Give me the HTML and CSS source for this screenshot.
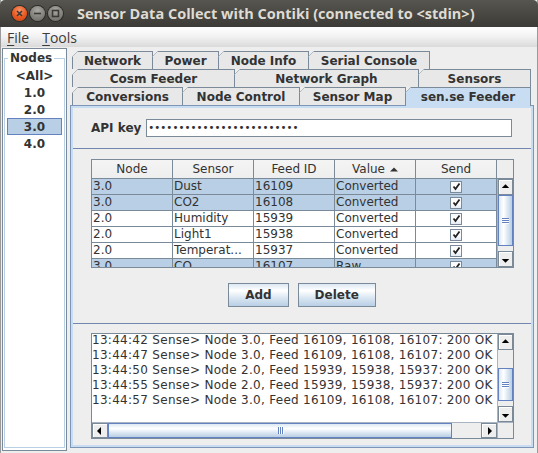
FILE: index.html
```html
<!DOCTYPE html>
<html lang="en">
<head>
<meta charset="utf-8">
<title>Sensor Data Collect with Contiki</title>
<link rel="stylesheet" href="styles.css">
</head>
<body>
<div class="window">
  <header class="titlebar">
    <div class="wbtns">
      <span class="wbtn close"><svg width="15" height="15" viewBox="0 0 15 15"><path d="M5 5 L10 10 M10 5 L5 10"/></svg></span>
      <span class="wbtn min"><svg width="15" height="15" viewBox="0 0 15 15"><path d="M4 7.5 H11"/></svg></span>
      <span class="wbtn max"><svg width="15" height="15" viewBox="0 0 15 15"><rect x="4.5" y="4.5" width="6" height="6"/></svg></span>
    </div>
    <div class="title">Sensor Data Collect with Contiki (connected to &lt;stdin&gt;)</div>
  </header>
  <nav class="menubar"><span class="menu"><u>F</u>ile</span><span class="menu"><u>T</u>ools</span></nav>
  <div class="main">
    <aside class="nodes">
      <fieldset class="nodes-box">
        <legend>Nodes</legend>
        <ul class="node-list">
          <li>&lt;All&gt;</li>
          <li>1.0</li>
          <li>2.0</li>
          <li class="sel">3.0</li>
          <li>4.0</li>
        </ul>
      </fieldset>
    </aside>
    <section class="tabpane">
      <div class="tabrow">
        <div class="tab t-network">Network</div>
        <div class="tab t-power">Power</div>
        <div class="tab t-nodeinfo">Node Info</div>
        <div class="tab t-serial">Serial Console</div>
      </div>
      <div class="tabrow">
        <div class="tab t-cosm">Cosm Feeder</div>
        <div class="tab t-graph">Network Graph</div>
        <div class="tab t-sensors">Sensors</div>
      </div>
      <div class="tabrow">
        <div class="tab t-conv">Conversions</div>
        <div class="tab t-control">Node Control</div>
        <div class="tab t-map">Sensor Map</div>
        <div class="tab t-sense active">sen.se Feeder</div>
      </div>
      <div class="content">
        <div class="panel">
          <div class="apirow">
            <label class="apilabel">API key</label>
            <div class="pwfield">•••••••••••••••••••••••••</div>
          </div>
          <div class="split">
            <div class="split-top">
              <div class="tablewrap">
                <div class="thead">
                  <div class="th">Node</div>
                  <div class="th">Sensor</div>
                  <div class="th">Feed ID</div>
                  <div class="th">Value <svg class="sort" width="8" height="5" viewBox="0 0 8 5"><path d="M0 4.5 L4 0.5 L8 4.5 Z"/></svg></div>
                  <div class="th">Send</div>
                </div>
                <div class="th-corner"></div>
                <div class="tbody">
                  <div class="tr sel"><div class="td">3.0</div><div class="td">Dust</div><div class="td">16109</div><div class="td">Converted</div><div class="td chk"><span class="cb"><svg width="9" height="9" viewBox="0 0 9 9"><path d="M1.5 4.5 L3.5 7 L7.5 1.5"/></svg></span></div></div>
                  <div class="tr sel"><div class="td">3.0</div><div class="td">CO2</div><div class="td">16108</div><div class="td">Converted</div><div class="td chk"><span class="cb"><svg width="9" height="9" viewBox="0 0 9 9"><path d="M1.5 4.5 L3.5 7 L7.5 1.5"/></svg></span></div></div>
                  <div class="tr"><div class="td">2.0</div><div class="td">Humidity</div><div class="td">15939</div><div class="td">Converted</div><div class="td chk"><span class="cb"><svg width="9" height="9" viewBox="0 0 9 9"><path d="M1.5 4.5 L3.5 7 L7.5 1.5"/></svg></span></div></div>
                  <div class="tr"><div class="td">2.0</div><div class="td">Light1</div><div class="td">15938</div><div class="td">Converted</div><div class="td chk"><span class="cb"><svg width="9" height="9" viewBox="0 0 9 9"><path d="M1.5 4.5 L3.5 7 L7.5 1.5"/></svg></span></div></div>
                  <div class="tr"><div class="td">2.0</div><div class="td">Temperat...</div><div class="td">15937</div><div class="td">Converted</div><div class="td chk"><span class="cb"><svg width="9" height="9" viewBox="0 0 9 9"><path d="M1.5 4.5 L3.5 7 L7.5 1.5"/></svg></span></div></div>
                  <div class="tr sel"><div class="td">3.0</div><div class="td">CO</div><div class="td">16107</div><div class="td">Raw</div><div class="td chk"><span class="cb"><svg width="9" height="9" viewBox="0 0 9 9"><path d="M1.5 4.5 L3.5 7 L7.5 1.5"/></svg></span></div></div>
                </div>
                <div class="vbar tbl-vbar">
                  <div class="sbtn"><svg width="14" height="14" viewBox="0 0 14 14"><path d="M3 8 L7 4 L11 8 Z"/></svg></div>
                  <div class="thumb v"><span></span><span></span><span></span></div>
                  <div class="track"></div>
                  <div class="sbtn"><svg width="14" height="14" viewBox="0 0 14 14"><path d="M3 7 L11 7 L7 11 Z"/></svg></div>
                </div>
              </div>
              <div class="buttons">
                <button class="btn">Add</button>
                <button class="btn">Delete</button>
              </div>
            </div>
            <div class="split-bottom">
              <div class="logwrap">
                <div class="logtext">
                  <div class="loglines">13:44:42 Sense&gt; Node 3.0, Feed 16109, 16108, 16107: 200 OK
13:44:47 Sense&gt; Node 3.0, Feed 16109, 16108, 16107: 200 OK
13:44:50 Sense&gt; Node 2.0, Feed 15939, 15938, 15937: 200 OK
13:44:55 Sense&gt; Node 2.0, Feed 15939, 15938, 15937: 200 OK
13:44:57 Sense&gt; Node 3.0, Feed 16109, 16108, 16107: 200 OK</div>
                </div>
                <div class="vbar log-vbar">
                  <div class="sbtn"><svg width="14" height="14" viewBox="0 0 14 14"><path d="M3 8 L7 4 L11 8 Z"/></svg></div>
                  <div class="track t1"></div>
                  <div class="thumb v"><span></span><span></span><span></span></div>
                  <div class="track"></div>
                  <div class="sbtn"><svg width="14" height="14" viewBox="0 0 14 14"><path d="M3 7 L11 7 L7 11 Z"/></svg></div>
                </div>
                <div class="hbar">
                  <div class="sbtn"><svg width="14" height="14" viewBox="0 0 14 14"><path d="M8 3 L4 7 L8 11 Z"/></svg></div>
                  <div class="thumb h"><span></span><span></span><span></span></div>
                  <div class="track"></div>
                  <div class="sbtn"><svg width="14" height="14" viewBox="0 0 14 14"><path d="M6 3 L10 7 L6 11 Z"/></svg></div>
                </div>
                <div class="corner"></div>
              </div>
            </div>
          </div>
        </div>
      </div>
    </section>
  </div>
</div>
</body>
</html>
```

FILE: styles.css
```css
* { box-sizing: border-box; }
html, body { margin: 0; padding: 0; }
body {
  width: 538px;
  height: 453px;
  overflow: hidden;
  background: #eeeeee;
  font-family: "DejaVu Sans", sans-serif;
  font-size: 12px;
  color: #333333;
}
.window {
  width: 538px;
  height: 453px;
  display: flex;
  flex-direction: column;
  background: #eeeeee;
  border-left: 1px solid #9a9a9a;
  border-right: 1px solid #9a9a9a;
}

/* title bar */
.titlebar {
  flex: none;
  height: 27px;
  margin: 0 -1px;
  display: flex;
  align-items: center;
  background: linear-gradient(#56554f, #3c3b37);
  border-radius: 5px 5px 0 0;
}
.wbtns { display: flex; gap: 3px; margin-left: 12px; }
.wbtn { width: 15px; height: 15px; border-radius: 50%; display: block; box-shadow: 0 0 0 1px #2d2c29; }
.wbtn svg { display: block; fill: none; stroke: #3a3935; stroke-width: 1.6; }
.close { background: radial-gradient(circle at 50% 30%, #f7956a, #e8571f 55%, #c2461a); }
.min, .max { background: radial-gradient(circle at 50% 30%, #a9a8a2, #83827c 55%, #696863); }
.title {
  margin-left: 14px;
  font-family: "Open Sans", sans-serif;
  font-weight: 700;
  font-size: 14.5px;
  color: #dfdbd2;
  white-space: nowrap;
}

/* menu bar */
.menubar {
  flex: none;
  height: 20px;
  display: flex;
  align-items: center;
  padding-left: 6px;
  background: linear-gradient(#ffffff, #f3f3f3 45%, #dadada);
  font-family: "Open Sans", sans-serif;
  font-size: 14px;
  color: #3c3c3c;
}
.menu { margin-right: 13px; }
.menu u { text-decoration-thickness: 1px; text-underline-offset: 2px; }

/* main */
.main { flex: 1; display: flex; min-height: 0; }

.nodes {
  flex: none;
  width: 65px;
  margin: 1px 0 2px 1px;
  border: 1px solid #7a8a99;
  background: #ffffff;
  padding: 2px 1px;
}
.nodes-box {
  margin: 0;
  padding: 0;
  height: 100%;
  min-width: 0;
  border: 1px solid #b8cfe5;
}
.nodes-box legend {
  margin-left: 3px;
  padding: 0 2px;
  font-weight: bold;
  line-height: 14px;
}
.node-list { list-style: none; margin: 2px 0 0; padding: 0; }
.node-list li {
  height: 17px;
  margin: 0 2px;
  display: flex;
  align-items: center;
  justify-content: center;
  font-weight: bold;
  border: 1px solid transparent;
}
.node-list li.sel { background: #b8cfe5; border-color: #6382bf; }

/* tabs */
.tabpane {
  flex: 1;
  min-width: 0;
  display: flex;
  flex-direction: column;
  margin: 0 3px 0 3px;
  padding: 4px 0 5px;
}
.tabrow { flex: none; display: flex; height: 18px; padding-left: 3px; }
.tab {
  position: relative;
  flex: none;
  height: 18px;
  margin-left: -1px;
  border: 1px solid #7a8a99;
  border-bottom: none;
  display: flex;
  align-items: center;
  justify-content: center;
  font-weight: bold;
  white-space: nowrap;
  background-color: #e8e8e8;
  background-image: linear-gradient(135deg, transparent 3.6px, #7a8a99 3.6px, #7a8a99 4.6px, transparent 4.6px);
  background-origin: border-box;
  clip-path: polygon(6px 0, 100% 0, 100% 100%, 0 100%, 0 6px);
}
.tab.active {
  z-index: 1;
  height: 19px;
  margin-bottom: -1px;
  background-color: #c8ddf2;
}
.t-network { width: 81px; }
.t-power { width: 67px; }
.t-nodeinfo { width: 91px; }
.t-serial { width: 122px; }
.t-cosm { width: 163px; }
.t-graph { width: 185px; }
.t-sensors { width: 113px; }
.t-conv { width: 111px; }
.t-control { width: 118px; }
.t-map { width: 107px; }
.t-sense { width: 126px; }

.content {
  flex: 1;
  min-height: 0;
  border: 1px solid #7f95b7;
  background: #c8ddf2;
  padding: 2px;
}
.panel {
  height: 100%;
  background: #eeeeee;
  display: flex;
  flex-direction: column;
}

/* api key */
.apirow {
  flex: none;
  height: 40px;
  display: flex;
  align-items: center;
  padding-left: 18px;
}
.apilabel { font-weight: bold; }
.pwfield {
  margin-left: 5px;
  width: 366px;
  height: 18px;
  border: 1px solid #7a8a99;
  background: #ffffff;
  padding-left: 1px;
  font-size: 10.2px;
  line-height: 16px;
  color: #333333;
  white-space: nowrap;
  overflow: hidden;
}

/* split */
.split { flex: 1; display: flex; flex-direction: column; border-top: 1px solid #7186b0; }
.split-top {
  flex: none;
  height: 175px;
  padding: 10px 0 0 18px;
  border-bottom: 1px solid #7186b0;
}
.split-bottom { flex: 1; padding: 9px 0 0 18px; }

/* table */
.tablewrap {
  width: 423px;
  border: 1px solid #7a8a99;
  display: grid;
  grid-template-columns: 405px 16px;
  grid-template-rows: 19px 88px;
  background: #eeeeee;
}
.thead { display: grid; grid-template-columns: repeat(5, 81px); }
.th {
  height: 19px;
  border-right: 1px solid #7a8a99;
  border-bottom: 1px solid #7a8a99;
  display: flex;
  align-items: center;
  justify-content: center;
  background: linear-gradient(#f4f4f4, #eeeeee);
}
.sort { margin-left: 5px; fill: #333333; }
.th-corner { border-bottom: 1px solid #7a8a99; background: #eeeeee; }
.tbody { overflow: hidden; background: #ffffff; }
.tr { display: grid; grid-template-columns: repeat(5, 81px); }
.tr.sel { background: #b8cfe5; }
.td {
  height: 16px;
  border-right: 1px solid #7a8a99;
  border-bottom: 1px solid #7a8a99;
  padding-left: 1px;
  line-height: 15px;
  white-space: nowrap;
  overflow: hidden;
}
.td.chk { display: flex; align-items: center; justify-content: center; padding: 0; }
.cb {
  width: 12px;
  height: 12px;
  border: 1px solid #7a8a99;
  background: linear-gradient(#f7f9fc, #ffffff 50%, #e4ecf5);
  display: flex;
  align-items: center;
  justify-content: center;
}
.cb svg { display: block; fill: none; stroke: #222222; stroke-width: 1.8; }

/* scrollbars */
.vbar { display: flex; flex-direction: column; background: #eeeeee; border-left: 1px solid #a8b4c2; }
.hbar { display: flex; background: #eeeeee; border-top: 1px solid #a8b4c2; }
.sbtn {
  flex: none;
  width: 16px;
  height: 16px;
  border: 1px solid #7a8a99;
  background: #eeeeee;
  box-shadow: inset 1px 1px 0 #ffffff;
  display: flex;
  align-items: center;
  justify-content: center;
}
.vbar .sbtn { width: 15px; }
.hbar .sbtn { height: 15px; }
.sbtn svg { display: block; fill: #000000; }
.track { flex: 1; }
.tbl-vbar .thumb { flex: none; height: 51px; }
.log-vbar .t1 { flex: none; height: 18px; }
.log-vbar .thumb { flex: none; height: 33px; }
.thumb {
  border: 1px solid #6382bf;
  display: flex;
  align-items: center;
  justify-content: center;
}
.thumb.v {
  flex-direction: column;
  gap: 1px;
  background: linear-gradient(to right, #dde8f3, #ffffff 35%, #dde8f3 65%, #b8cfe5);
}
.thumb.v span { width: 7px; height: 1px; background: #6382bf; box-shadow: 0 1px 0 #ffffff; }
.thumb.h {
  flex: none;
  width: 344px;
  gap: 1px;
  background: linear-gradient(#dde8f3, #ffffff 35%, #dde8f3 65%, #b8cfe5);
}
.thumb.h span { width: 1px; height: 7px; background: #6382bf; box-shadow: 1px 0 0 #ffffff; }

/* buttons */
.buttons {
  display: flex;
  justify-content: center;
  gap: 9px;
  margin-top: 15px;
  padding-right: 18px;
}
.btn {
  height: 24px;
  padding: 0 16px;
  margin: 0;
  border: 1px solid #7a8a99;
  border-radius: 0;
  background: linear-gradient(#dde8f3, #ffffff 30%, #dde8f3 60%, #b8cfe5);
  font-family: "DejaVu Sans", sans-serif;
  font-size: 12px;
  font-weight: bold;
  color: #333333;
}

/* log */
.logwrap {
  width: 423px;
  border: 1px solid #7a8a99;
  display: grid;
  grid-template-columns: 405px 16px;
  grid-template-rows: 88px 16px;
  background: #eeeeee;
}
.logtext { background: #ffffff; overflow: hidden; }
.loglines {
  margin-top: -1px;
  white-space: pre;
  line-height: 15px;
  font-size: 12px;
  letter-spacing: 0.29px;
  color: #333333;
}
.corner { background: #eeeeee; border-top: 1px solid #a8b4c2; border-left: 1px solid #a8b4c2; }
```
